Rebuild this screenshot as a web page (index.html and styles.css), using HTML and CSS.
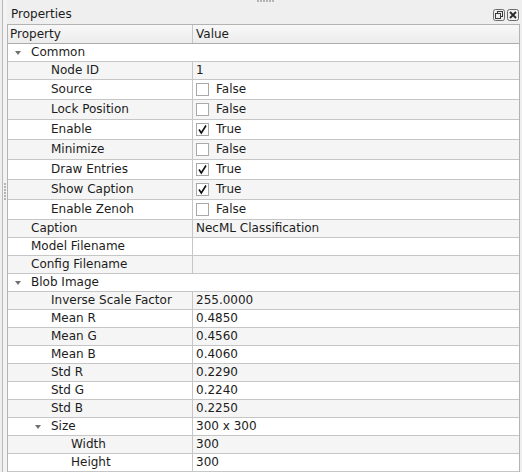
FILE: index.html
```html
<!DOCTYPE html>
<html lang="en">
<head>
  <meta charset="UTF-8">
  <title>Properties</title>
  <link rel="stylesheet" href="styles.css">
</head>
<body>
  <div class="dock">
    <div class="grip-top"></div>

    <!-- left splitter edge -->
    <div class="edge"><div class="edge-dots"></div></div>

    <div class="main">
      <div class="titlebar">
        <span class="title">Properties</span>
        <div class="title-btns">
          <svg class="tbtn" width="12" height="12" viewBox="0 0 12 12">
            <rect x="0.5" y="0.5" width="11" height="11" rx="2" fill="none" stroke="#6b6b6b"/>
            <rect x="4.5" y="2.5" width="5" height="5" fill="none" stroke="#3a3a3a"/>
            <rect x="2.5" y="4.5" width="5" height="5" fill="#efefef" stroke="#3a3a3a"/>
          </svg>
          <svg class="tbtn" width="12" height="12" viewBox="0 0 12 12">
            <rect x="0.5" y="0.5" width="11" height="11" rx="2" fill="none" stroke="#6b6b6b"/>
            <path d="M3 3 L9 9 M9 3 L3 9" stroke="#2a2a2a" stroke-width="1.8"/>
          </svg>
        </div>
      </div>

      <div class="tree">
        <div class="row head">
          <div class="name">Property</div>
          <div class="val">Value</div>
        </div>
        <div class="rows">
          <div class="row group"><div class="name d0"><span class="tw open"></span>Common</div></div>
          <div class="row"><div class="name d1"><span class="tw"></span>Node ID</div><div class="val">1</div></div>
          <div class="row chk"><div class="name d1"><span class="tw"></span>Source</div><div class="val"><span class="cb"></span>False</div></div>
          <div class="row chk"><div class="name d1"><span class="tw"></span>Lock Position</div><div class="val"><span class="cb"></span>False</div></div>
          <div class="row chk"><div class="name d1"><span class="tw"></span>Enable</div><div class="val"><span class="cb on"><svg width="11" height="11" viewBox="0 0 11 11"><path d="M2 5.5 L4.3 9 L9 1.5" fill="none" stroke="#111" stroke-width="1.6"/></svg></span>True</div></div>
          <div class="row chk"><div class="name d1"><span class="tw"></span>Minimize</div><div class="val"><span class="cb"></span>False</div></div>
          <div class="row chk"><div class="name d1"><span class="tw"></span>Draw Entries</div><div class="val"><span class="cb on"><svg width="11" height="11" viewBox="0 0 11 11"><path d="M2 5.5 L4.3 9 L9 1.5" fill="none" stroke="#111" stroke-width="1.6"/></svg></span>True</div></div>
          <div class="row chk"><div class="name d1"><span class="tw"></span>Show Caption</div><div class="val"><span class="cb on"><svg width="11" height="11" viewBox="0 0 11 11"><path d="M2 5.5 L4.3 9 L9 1.5" fill="none" stroke="#111" stroke-width="1.6"/></svg></span>True</div></div>
          <div class="row chk"><div class="name d1"><span class="tw"></span>Enable Zenoh</div><div class="val"><span class="cb"></span>False</div></div>
          <div class="row"><div class="name d0"><span class="tw"></span>Caption</div><div class="val">NecML Classification</div></div>
          <div class="row"><div class="name d0"><span class="tw"></span>Model Filename</div><div class="val"></div></div>
          <div class="row"><div class="name d0"><span class="tw"></span>Config Filename</div><div class="val"></div></div>
          <div class="row group"><div class="name d0"><span class="tw open"></span>Blob Image</div></div>
          <div class="row"><div class="name d1"><span class="tw"></span>Inverse Scale Factor</div><div class="val">255.0000</div></div>
          <div class="row"><div class="name d1"><span class="tw"></span>Mean R</div><div class="val">0.4850</div></div>
          <div class="row"><div class="name d1"><span class="tw"></span>Mean G</div><div class="val">0.4560</div></div>
          <div class="row"><div class="name d1"><span class="tw"></span>Mean B</div><div class="val">0.4060</div></div>
          <div class="row"><div class="name d1"><span class="tw"></span>Std R</div><div class="val">0.2290</div></div>
          <div class="row"><div class="name d1"><span class="tw"></span>Std G</div><div class="val">0.2240</div></div>
          <div class="row"><div class="name d1"><span class="tw"></span>Std B</div><div class="val">0.2250</div></div>
          <div class="row"><div class="name d1"><span class="tw open"></span>Size</div><div class="val">300 x 300</div></div>
          <div class="row"><div class="name d2"><span class="tw"></span>Width</div><div class="val">300</div></div>
          <div class="row"><div class="name d2"><span class="tw"></span>Height</div><div class="val">300</div></div>
          <div class="row"><div class="name d0"></div><div class="val"></div></div>
        </div>
      </div>
    </div>
  </div>
</body>
</html>
```

FILE: styles.css
```css
html, body {
  margin: 0;
  padding: 0;
}
body {
  width: 522px;
  height: 472px;
  overflow: hidden;
  background-color: #efefef;
  font-family: "DejaVu Sans", sans-serif;
  font-size: 12px;
  color: #1c1c1c;
}
.dock {
  position: relative;
  display: flex;
  height: 472px;
}
.grip-top {
  position: absolute;
  left: 257px;
  top: 0;
  width: 17px;
  height: 2px;
  background: repeating-linear-gradient(90deg, #b4b4b4 0 2px, transparent 2px 3px);
}
.edge {
  width: 4px;
  margin-left: 2px;
  border-left: 1px solid #b9b9b9;
  background-color: #f3f3f3;
}
.edge-dots {
  margin: 183px 0 0 1px;
  width: 2px;
  height: 17px;
  background: repeating-linear-gradient(180deg, #b4b4b4 0 2px, transparent 2px 3px);
}
.main {
  flex: 1;
  display: flex;
  flex-direction: column;
  min-width: 0;
  overflow: hidden;
}
.titlebar {
  flex: none;
  height: 24px;
  display: flex;
  align-items: flex-end;
  justify-content: space-between;
  padding: 0 3px 0 4px;
  box-sizing: border-box;
}
.title {
  padding-bottom: 3px;
}
.title-btns {
  display: flex;
  gap: 2px;
  padding-bottom: 3px;
}
.tbtn {
  display: block;
}
.tree {
  flex: none;
  margin-right: 2px;
  border: 1px solid #b3b3b3;
  border-bottom: none;
  background-color: #fff;
}
.row {
  display: grid;
  grid-template-columns: 185px 1fr;
  height: 17px;
  border-bottom: 1px solid #c6c6c6;
  line-height: 17px;
  white-space: nowrap;
}
.row.head {
  height: 18px;
  line-height: 18px;
}
.row.chk {
  height: 19px;
  line-height: 19px;
}
.rows > .row:nth-child(even) {
  background-color: #f5f5f5;
}
.row.head {
  background: linear-gradient(#f8f8f8, #ececec);
  border-bottom-color: #acacac;
}
.row.head .name {
  padding-left: 2px;
}
.name {
  display: flex;
  align-items: center;
  border-right: 1px solid #c6c6c6;
  overflow: hidden;
}
.row.group .name {
  grid-column: 1 / -1;
  border-right: none;
}
.val {
  display: flex;
  align-items: center;
  padding-left: 3px;
  overflow: hidden;
}
.d0 { padding-left: 3px; }
.d1 { padding-left: 23px; }
.d2 { padding-left: 43px; }
.tw {
  flex: none;
  width: 20px;
  height: 17px;
  position: relative;
}
.tw.open::after {
  content: "";
  position: absolute;
  left: 4px;
  top: 7px;
  border-left: 3.5px solid transparent;
  border-right: 3.5px solid transparent;
  border-top: 4px solid #707070;
}
.cb {
  flex: none;
  width: 11px;
  height: 11px;
  border: 1px solid #a9a9a9;
  background-color: #fff;
  margin-right: 7px;
  display: flex;
  align-items: center;
  justify-content: center;
}
.cb svg {
  display: block;
}
```
